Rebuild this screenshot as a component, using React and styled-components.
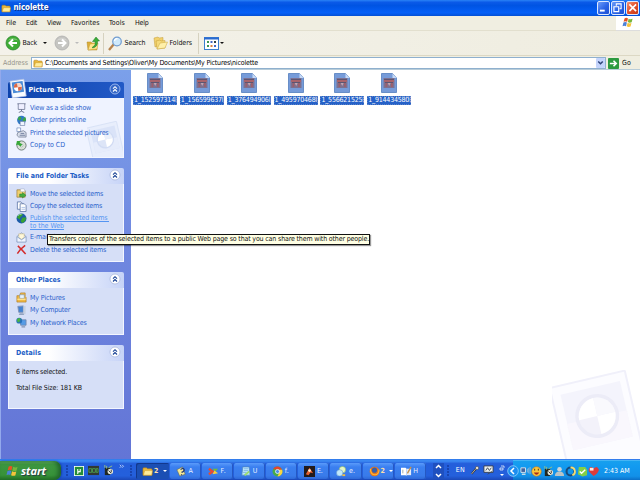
import React, { useLayoutEffect, useRef, useState } from "react";
import styled, { createGlobalStyle, css } from "styled-components";

const Global = createGlobalStyle`
  * { box-sizing: border-box; }
  html, body { margin: 0; padding: 0; overflow: hidden; }
  body { font-family: "DejaVu Sans Condensed", "DejaVu Sans", sans-serif; font-stretch: condensed; font-size: 7px; color: #111; }
`;

/* A single line of text whose tracking is adjusted to fill a given width. */
const Line = styled.span`
  display: block;
  flex: none;
  width: ${(p) => p.$w}px;
  margin-left: ${(p) => p.$ml || 0}px;
  white-space: pre;
  line-height: 1.2;
`;
function Fit({ w, ml, children }) {
  const ref = useRef(null);
  const [track, setTrack] = useState(0);
  useLayoutEffect(() => {
    const width = ref.current.getBoundingClientRect().width;
    setTrack((w - width) / String(children).length);
  }, [w, children]);
  return (
    <Line $w={w} $ml={ml}>
      <span ref={ref} style={{ letterSpacing: track }}>{children}</span>
    </Line>
  );
}

const Screen = styled.div`
  width: 640px; height: 480px; display: flex; flex-direction: column;
  background: #fff; overflow: hidden; position: relative;
`;
const TitleBar = styled.header`
  height: 16px; flex: none; display: flex; align-items: center; padding: 0 1px 0 1px;
  background: linear-gradient(#2a83f6 0, #0b5ae8 14%, #0054e3 35%, #0560f8 80%, #0450d4 100%);
  color: #fff; font-size: 8px; font-weight: bold; text-shadow: 1px 1px #0a2f8a;
`;
const Spacer = styled.div`flex: 1;`;
const Gap = styled.i`width: ${(p) => p.$w || 6}px; flex: none;`;
const Controls = styled.div`display: flex; gap: 1px;`;
const Control = styled.div`
  width: 13.5px; height: 13.5px; border: 1px solid #dce8ff; border-radius: 2px;
  background: ${(p) => (p.$close ? "linear-gradient(135deg,#f39474,#e2502b 50%,#c63a18)" : "linear-gradient(135deg,#6d9cf8,#2a63e6 55%,#1e4fd0)")};
  display: flex;
  svg { width: 100%; height: 100%; }
`;
const MenuBar = styled.nav`
  height: 15px; flex: none; display: flex; align-items: center; background: #f0eee1;
  border-bottom: 1px solid #e2dfce; padding-left: 6px;
`;
const Flag = styled.div`
  width: 24px; height: 15px; background: #fff; display: flex; align-items: center; justify-content: center;
  border-bottom: 1px solid #ddd;
`;
const Toolbar = styled.div`
  height: 25px; flex: none; display: flex; align-items: center; padding-left: 5px;
  background: linear-gradient(90deg, #f4f2ea, #efede0); border-bottom: 1px solid #dcd8c4;
`;
const Rule = styled.i`
  width: 1px; height: 21px; background: #d6d2c0; margin-left: ${(p) => p.$ml}px; flex: none;
`;
const Caret = styled.i`
  flex: none; border: 2px solid transparent; border-top: 2.5px solid ${(p) => p.$c || "#111"}; border-bottom: 0; margin-left: ${(p) => p.$ml}px;
`;
const AddressBar = styled.div`
  height: 14px; flex: none; display: flex; align-items: center; padding: 1px 0 0 3px; background: #f0eee0;
  border-bottom: 1px solid #b9cdd9;
`;
const Caption = styled.div`color: #96948a; width: 28px; flex: none;`;
const Field = styled.div`
  width: 575px; height: 12px; flex: none; display: flex; align-items: center; background: #fff; border: 1px solid #8fb0ce; padding-left: 1px; color: #000;
`;
const DropButton = styled.div`
  width: 9px; height: 10px; border-radius: 1px; background: #c4d4fc; display: flex; flex: none;
`;
const Body = styled.div`flex: 1; min-height: 0; display: flex;`;
const Sidebar = styled.aside`
  width: 131px; flex: none; padding: 12px 7px 0 8px; display: flex; flex-direction: column; gap: 10px;
  background: linear-gradient(#7ba0ea, #7088e0 45%, #6375d6); box-shadow: inset 1px 0 #93a9ec;
`;
const Panel = styled.section`
  height: ${(p) => p.$h}px; flex: none; display: flex; flex-direction: column;
`;
const PanelHead = styled.div`
  height: 16px; flex: none; display: flex; align-items: center; padding: 0 3px 0 8px; border-radius: 2px 2px 0 0;
  font-weight: bold; color: #215dc6;
  background: linear-gradient(90deg, #fff 35%, #c6d3f7);
  > svg { margin-top: -2px; }
  ${(p) => p.$primary && css`
    padding-left: 0; color: #fff; background: linear-gradient(90deg, #0d43ac, #2259c6);
  `}
`;
const PanelBody = styled.div`
  flex: 1; padding: ${(p) => p.$top || 3.6}px 0 0 7px; color: #2b62cc; background: ${(p) => (p.$primary ? "#eff3ff" : "#d6dff7")};
  border: 1px solid #f3f6ff; border-top: 0; position: relative;
`;
const Task = styled.div`
  height: ${(p) => p.$h || 12.5}px; display: flex; align-items: ${(p) => (p.$h ? "flex-start" : "center")}; gap: 3px; position: relative;
  > svg { width: 11px; height: 11px; flex: none; }
`;
const LinkLines = styled.div`
  color: #5595f2; text-decoration: underline; line-height: 8px; padding-top: 1px;
  > span { line-height: 8px; }
`;
const Detail = styled.p`margin: 0; height: 16px; color: #111;`;
const Ghost = styled.svg`position: absolute; right: 0; bottom: 0; width: 36px; height: 36px;`;
const PhotoWrap = styled.div`width: 20.5px; height: 22px; flex: none; margin-bottom: 5px; svg { display: block; }`;
const Main = styled.main`flex: 1; min-width: 0; position: relative; padding: 3px 0 0 2px; overflow: hidden;`;
const Files = styled.div`display: grid; grid-template-columns: repeat(6, 44px); column-gap: 2.85px;`;
const File = styled.figure`
  margin: 0; display: flex; flex-direction: column; align-items: center; gap: 2.5px;
  svg { width: 16px; height: 20px; }
`;
const FileName = styled.figcaption`
  width: 44px; height: 9.5px; background: #2561c8; color: #fff; padding-left: 1px; overflow: hidden;
  outline: 1px dotted #5b83c8; outline-offset: -1px;
  display: flex; align-items: center;
`;
const Watermark = styled.svg`position: absolute; right: -1px; bottom: 0; width: 89px; height: 89px;`;
const Tip = styled.div`
  position: absolute; left: 47px; top: 234px; width: 323px; height: 11px; background: #ffffe4; border: 1px solid #111;
  box-shadow: 1px 1px 1px #0006; color: #111; display: flex; align-items: center; padding-left: 1px;
`;
const Taskbar = styled.footer`
  height: 21px; flex: none; display: flex; align-items: center; color: #fff;
  background: linear-gradient(#2f78ea 0, #3d8cf4 9%, #245edb 22%, #2460dc 80%, #1b48b8 100%);
`;
const Start = styled.div`
  width: 61px; height: 19px; margin-top: 2px; flex: none; display: flex; align-items: center; padding-left: 6px; gap: 2px;
  border-radius: 0 7px 7px 0; background: linear-gradient(#65ad62 0, #3d9640 18%, #379239 75%, #247526);
  box-shadow: inset -3px 0 4px #20652a, 1px 0 2px #173fa5;
  font: italic bold 11px "Open Sans", sans-serif; text-shadow: 1px 1px 1px #234;
`;
const Grip = styled.i`
  width: 3px; height: 12px; margin: 2px 0 0 ${(p) => p.$ml}px; flex: none;
  background: radial-gradient(circle at 1px 1px, #143b9f 0.6px, transparent 1px) 0 0 / 3px 3px;
`;
const Quick = styled.div`
  display: flex; align-items: center; gap: 4px; margin: 2px 0 0 5px; width: 56px; flex: none;
  svg { flex: none; }
  svg:last-child { margin: -7px 0 0 1px; }
`;
const Tasks = styled.div`display: flex; gap: 1px; margin: 3px 0 0 3px; flex: none;`;
const TaskButton = styled.div`
  width: ${(p) => (p.$on ? 33 : 31.1)}px; height: 16px; display: flex; align-items: center; padding-left: 6px;
  border-radius: 2px; color: ${(p) => (p.$warm ? "#ffe0a8" : "#e8f1ff")}; font-weight: ${(p) => (p.$bold ? "bold" : "normal")};
  background: ${(p) => (p.$on ? "#1b4fb4" : "linear-gradient(#5b9bfa, #3a7ff0 25%, #397bea 80%, #2e69d8)")};
  box-shadow: ${(p) => (p.$on ? "inset 1px 1px #12388c" : "inset -1px 0 #2558c2")};
  svg { width: 11px; height: 11px; flex: none; }
`;
const Scroller = styled.div`width: 11px; margin: 2px 0 0 7px; flex: none; svg { display: block; }`;
const Lang = styled.div`
  display: flex; align-items: center; margin: 2px 0 0 6px; width: 57px; flex: none; svg { flex: none; }
`;
const Tray = styled.div`
  flex: 1; height: 20px; display: flex; align-items: center; padding-top: 2px; border-top: 1px solid #45b5f5;
  background: linear-gradient(#17a0ee 0, #129af0 30%, #1290e8 80%, #0b6fc8);
`;
const TrayIcons = styled.div`
  display: flex; flex: none; gap: 0.4px;
  svg { width: 11px; height: 11px; flex: none; }
`;
const Chevron = styled.div`width: 12px; height: 12px; flex: none; margin: 0 1px 0 -6px; svg { display: block; }`;

const Svg = ({ children, v = "0 0 12 12", w = 12, h = 12, ...rest }) => (
  <svg viewBox={v} width={w} height={h} fill="none" {...rest}>{children}</svg>
);
const Folder = ({ w = 11, h = 10 }) => (
  <Svg w={w} h={h} v="0 0 12 10">
    <path d="M1 2q0-1 1-1h3l1 1h4q1 0 1 1v6H1z" fill="#e9b83d" stroke="#a87916" strokeWidth=".6" />
    <path d="M1.500 9 3 4h8.500L10.500 9z" fill="#ffeb99" stroke="#c79528" strokeWidth=".5" />
  </Svg>
);
const RoundArrow = ({ grey }) => (
  <Svg w={16} h={16} v="0 0 16 16">
    <circle cx="8" cy="8" r="7" fill={grey ? "#c5c5c1" : "#3fac35"} stroke={grey ? "#aaa" : "#25822a"} strokeWidth=".7" />
    <path d="M3 5.500a5.500 4 0 0 1 10 0Q8 3.700 3 5.500" fill="#fff" opacity=".35" />
    <path d={grey ? "M4 8h7M8 4.500 11.500 8 8 11.500" : "M12 8H5M8 4.500 4.500 8 8 11.500"} stroke="#fff" strokeWidth="2" />
  </Svg>
);
const UpFolder = () => (
  <Svg w={14} h={15} v="0 0 14 15">
    <path d="M1 6h4l1 1h5v7H2z" fill="#dcae35" stroke="#b08a2a" strokeWidth=".5" />
    <path d="M2 14 4 8l8-1-1 6z" fill="#ffe68e" stroke="#c79c38" strokeWidth=".5" />
    <path d="M6.500 11Q10 9.500 9 5.500H6.500L10 1l3.500 4H11.500q.5 6-5 7z" fill="#3aad38" stroke="#1e7922" strokeWidth=".5" />
  </Svg>
);
const Magnifier = () => (
  <Svg w={15} h={15} v="0 0 15 15">
    <path d="m1 14 5-6" stroke="#b7834d" strokeWidth="2.300" />
    <circle cx="9" cy="5.500" r="4.300" fill="#cfe9fb" stroke="#729dd0" strokeWidth="1.200" />
    <path d="M6.500 5a2.700 2.700 0 0 1 3-2.300" stroke="#fff" strokeWidth="1.200" />
  </Svg>
);
const FolderPair = () => (
  <Svg w={15} h={14} v="0 0 15 14">
    <path d="M1 2 5 1l1 1 4-.5V8L2 11z" fill="#f2d16c" stroke="#c09b37" strokeWidth=".5" />
    <path d="m3 5 4-1 1 1 4-.5V12l-8 1z" fill="#f5d979" stroke="#c09b37" strokeWidth=".5" />
    <path d="m4 13 3-6 7.500-1L12 12z" fill="#fff0a9" stroke="#c9a43f" strokeWidth=".5" />
  </Svg>
);
const Views = () => (
  <Svg w={15} h={13} v="0 0 15 13">
    <rect x=".5" y=".5" width="14" height="12" fill="#fff" stroke="#3a7fd0" />
    <path d="M0 1.500h15" stroke="#2b6bd0" strokeWidth="2" />
    <path d="M3 5h2M3 9h2" stroke="#3e9552" strokeWidth="2" /><path d="M6.500 5h2M10 9h2" stroke="#4269c5" strokeWidth="2" />
    <path d="M10 5h2" stroke="#344" strokeWidth="2" /><path d="M6.500 9h2" stroke="#d88143" strokeWidth="2" />
  </Svg>
);
const WinFlag = ({ w = 12, h = 11 }) => (
  <Svg w={w} h={h}>
    <path d="M2.200 1.500Q4 .3 6 1.500L5 5.300Q3 4.200 1.200 5.300z" fill="#e65324" />
    <path d="M6.700 1.800q2 1.200 4.300.2l-1 3.700q-2.300 1-4.200-.2z" fill="#77b63b" />
    <path d="M1 6.100q2-1.100 3.800-.1l-1 4Q2 9 0 10z" fill="#4c81d7" />
    <path d="M5.600 6.300q2 1.200 4.200.2l-1 3.900q-2.200 1-4.200-.2z" fill="#f6c33b" />
  </Svg>
);
const Collapse = ({ dark }) => (
  <Svg w={12} h={12}>
    <circle cx="6" cy="6" r="5" fill={dark ? "#3567c7" : "#fff"} stroke={dark ? "#b4caf5" : "#aab7dc"} strokeWidth=".8" />
    <path d="m4 5.700 2-2 2 2M4 8.500l2-2 2 2" stroke={dark ? "#fff" : "#153f92"} strokeWidth="1.100" />
  </Svg>
);
const Photo = () => (
  <Svg w={22} h={22} v="0 0 22 22">
    <g transform="rotate(-8 11 11)">
      <rect x="3" y="3" width="14" height="17" fill="#f8fbff" stroke="#b4c3e5" strokeWidth=".7" />
      <rect x="4.500" y="4.500" width="11" height="11" fill="#4b8bd6" />
      <circle cx="10" cy="10" r="4" fill="#fff" />
      <path d="M10 10V6A4 4 0 0 0 6 10zM10 10v4a4 4 0 0 0 4-4z" fill="#dc6744" />
      <path d="M10 10V6a4 4 0 0 1 4 4z" fill="#f3d5c8" />
    </g>
  </Svg>
);
const GhostArt = ({ faint }) => (
  <g transform="rotate(-13 45 45)">
    <rect x="5" y="8" width="77" height="98" rx="1" fill={faint ? "#fcfcff" : "#e8eefc"} stroke={faint ? "#f0f0fa" : "#d6e0f5"} strokeWidth="2" />
    <rect x="14" y="17" width="61" height="57" fill={faint ? "#f4f4fc" : "#dae3f8"} />
    <path d="M14 47h61v27H14z" fill={faint ? "#f9f7fd" : "#e6ecfb"} />
    <circle cx="45" cy="46" r="22" fill={faint ? "#ececf7" : "#d2dcf4"} />
    <circle cx="45" cy="46" r="18.500" fill={faint ? "#f3f2fa" : "#dde5f7"} />
    <path d="M45 46H26.500a18.500 18.500 0 0 1 18.500-18.500zM45 46h18.500a18.500 18.500 0 0 1-18.500 18.500z" fill="#fff" />
    <path d="M45 46V27.500a18.500 18.500 0 0 1 18.500 18.500z" fill={faint ? "#f9f9fd" : "#ebf0fb"} />
  </g>
);

const glyphs = {
  slide: <><path d="M1.500 2h9M2.500 2v6h7V2M6 8v2l-3 1.500M6 10l3 1.500" stroke="#6a7390" /><path d="M3 2.500h6v5H3z" fill="#eef" /></>,
  globePrint: <><circle cx="6" cy="5.500" r="4.800" fill="#2f79c6" /><path d="M3 1.500q3 0 3 2.500L4 6 2 5zM7 5l3-3q1 2 1 4L8 8z" fill="#3da545" /><path d="M4.500 7h5v4.500h-5z" fill="#eef4ff" stroke="#586b97" strokeWidth=".6" /></>,
  printer: <><path d="M1 1h4v4H1z" fill="#fff" stroke="#6380b5" strokeWidth=".7" /><path d="m2 6 6-2 3 2v5H3L1 9z" fill="#d8deea" stroke="#606a82" strokeWidth=".7" /><path d="M5 7h4M4 9h6" stroke="#56658a" strokeWidth=".8" /></>,
  cd: <><circle cx="6" cy="6" r="5" fill="#d9e0d8" stroke="#5d6c68" strokeWidth=".9" /><circle cx="6" cy="6" r="1.500" fill="#fff" stroke="#788" strokeWidth=".5" /><path d="M1 1h4l-1 2 3 2-2 2-3-2-2 1z" fill="#38a83a" /></>,
  move: <><path d="M1 2h4l1 1h4v7H1z" fill="#f0cf6f" stroke="#927333" strokeWidth=".7" /><path d="M5 1h4l1 3H5z" fill="#fff" stroke="#8793a8" strokeWidth=".4" /><path d="M4 6.500h3V5l4 3-4 3V9.500H4z" fill="#45ac40" stroke="#26752b" strokeWidth=".5" /></>,
  copy: <><path d="M1.500 1h4l2 2v6h-6z" fill="#fff" stroke="#50699d" strokeWidth=".8" /><path d="M4.500 3H9l2 2v6.500H4.500z" fill="#fff" stroke="#50699d" strokeWidth=".8" /><path d="M6 7h4M6 9h4" stroke="#acc1e7" /></>,
  globe: <><circle cx="6" cy="6" r="5.400" fill="#1d5ca8" /><path d="M1 5q2-4 6-4 1 2-2 3L4 7zM7 5h4q0 4-4 6L5 9z" fill="#37a233" /><path d="M2 3q2-2 4-1.500" stroke="#a6e090" /></>,
  mail: <><path d="M1 5 6 1l5 4v6H1z" fill="#eff4ff" stroke="#6982ad" strokeWidth=".7" /><path d="M3 2h6v4L6 8 3 6z" fill="#fff8d9" stroke="#b2a171" strokeWidth=".5" /><path d="m1 5 5 3.500L11 5" stroke="#6f90c3" strokeWidth=".7" /></>,
  cross: <path d="M2 2q4 3.500 8.500 9M10 1.500Q5 5 1.500 10.500" stroke="#d32b2b" strokeWidth="1.600" />,
  pictures: <><path d="M1 4h3l1-3h5v4l1 1v5H1z" fill="#f0b945" stroke="#ae7c23" strokeWidth=".7" /><path d="M4 3h5v4H4z" fill="#e6f4ff" stroke="#7190b0" strokeWidth=".6" /><path d="M1.500 8h9" stroke="#ffe18a" strokeWidth="1.500" /></>,
  computer: <><path d="M2 1.500 8 1v7H3z" fill="#4383d4" stroke="#8193b6" /><path d="M8 1h2.500v9H8z" fill="#c6d0e0" /><path d="M4 9h4l1 2H3z" fill="#93a3c0" /></>,
  network: <><path d="M5 3h6v6H5z" fill="#559be6" stroke="#7184a8" strokeWidth=".8" /><path d="M6 10h4v1.500H6z" fill="#8898b8" /><circle cx="3.500" cy="4" r="3.200" fill="#2872bb" /><path d="M1 3q2-3 4-1L4 5 2 6z" fill="#4ab544" /></>,
  mu: <><rect width="12" height="12" fill="#f5fff3" /><path d="M1 1h10v10H1z" fill="#258d37" /><path d="M4.500 9.500V3.500v2q0 1.500 1.500 1.500t1.500-1.500v-2V7.500" stroke="#fff" strokeWidth="1.300" /></>,
  dark: <><path d="M0 1h12v10H0z" fill="#313934" /><path d="M1 4h3v4H1zM5 4h3v4H5zM9 4h2v4H9z" stroke="#53b357" strokeWidth=".8" /></>,
  winamp: <><path d="M2 3h6v8H2z" fill="#202721" /><path d="M2 0v3M4 1v3M6 3l4-2" stroke="#98c27d" /><circle cx="8" cy="7" r="3" fill="#e0e6dc" /><path d="m6 6 3 3M9 5v3" stroke="#333" /></>,
  help: <><path d="m1 4 6-3 3 8-6 2z" fill="#f5e894" stroke="#606455" strokeWidth=".6" /><path d="M5 4q3-3 4 0 0 2-3 3M6 9v1" stroke="#263b75" strokeWidth="1.300" /></>,
  knot: <><path d="m1 3 4 3-4 3" stroke="#e74b32" strokeWidth="2.500" /><path d="M5 3h6L8 6z" fill="#76bd32" /><path d="m5 9 6-1-4-3z" fill="#ffcf35" /></>,
  note: <><path d="M3 1h7l1 9H2z" fill="#bfe6ff" stroke="#4e88bd" strokeWidth=".8" /><path d="M4 3h5M4 5h5M3 7h4" stroke="#5fa5d8" strokeWidth=".7" /><path d="m5 10 5-4" stroke="#9cdc70" strokeWidth="2" /></>,
  chrome: <><circle cx="6" cy="6" r="5.400" fill="#47aa4b" /><path d="M1.300 3.300A5.400 5.400 0 0 1 11 4H6z" fill="#e7432e" /><path d="M11 4a5.400 5.400 0 0 1-5 7.400L8 7 7 4z" fill="#fbd43f" /><circle cx="6" cy="6" r="2.200" fill="#4d8deb" stroke="#fff" strokeWidth=".8" /></>,
  art: <><path d="M0 0h12v12H0z" fill="#221b1b" /><path d="M2 9 6 2l4 6-3-1-2 3z" fill="#e86130" /><circle cx="6" cy="5" r="1.500" fill="#fff1d5" /></>,
  bubbles: <><circle cx="7" cy="4" r="3.500" fill="#e5f6c7" stroke="#87b55a" strokeWidth=".6" /><circle cx="4" cy="7.500" r="3.500" fill="#c1e8fa" stroke="#5c93ce" strokeWidth=".6" /><path d="M7 10h3" stroke="#f4bd3c" strokeWidth="2" /></>,
  fox: <><circle cx="6" cy="6" r="5.300" fill="#e8761d" /><circle cx="6" cy="4.500" r="2.800" fill="#345fa9" /><path d="M1.500 3q0 6 4.500 6.500T11 4" stroke="#ffb733" strokeWidth="1.200" /></>,
  book: <><path d="M0 2h5l1 1v8L5 10H0z" fill="#fff" /><path d="M6 3h5v7H6z" fill="#e7edf6" /><path d="m7 8 4-7" stroke="#c4924e" strokeWidth="1.500" /><path d="M2 4v4" stroke="#9aa" /></>,
  mic: <><path d="m2 10 5-6" stroke="#2b2f3a" strokeWidth="2.200" /><path d="m2 10 5-6" stroke="#d9c9a8" strokeWidth="1" /><circle cx="8.500" cy="3" r="2" fill="#e9e0cc" stroke="#2b2f3a" strokeWidth=".6" /></>,
  screen: <><path d="M1 1h10v7H1z" fill="#eef1ef" stroke="#303a4e" /><path d="m3 6 2-3 2 3 2-3M5 10l5-3" stroke="#444b54" /></>,
  wave: <><path d="M1 2h5v5H1z" fill="#4164a0" stroke="#dce6ee" /><path d="M2 9h4" stroke="#cfe0e8" strokeWidth="1.500" /><path d="M8 3v4M9.500 2v6M11 1v8" stroke="#a9bed4" strokeWidth=".8" /></>,
  smile: <><circle cx="6" cy="6" r="5.200" fill="#fac83a" stroke="#ca7020" strokeWidth=".6" /><path d="M3 7q3 5 6 0z" fill="#a62b1a" /><path d="M4 3v2M8 3v2" stroke="#482a18" /></>,
  person: <><circle cx="6" cy="3.500" r="2.500" fill="#cdd5d8" /><path d="M1 11q0-5 5-5t5 5z" fill="#b8c3c6" /></>,
  ring: <><circle cx="6" cy="6" r="4.300" stroke="#194a7b" strokeWidth="2.300" /><path d="M6 1.700A4.300 4.300 0 0 1 8 10" stroke="#f4db71" strokeWidth="2" /></>,
  skype: <><path d="M2 1h7l2 3v6l-5 1.500L1 9z" fill="#83cf45" /><path d="m3 6 2 2 4-4" stroke="#fff" strokeWidth="1.500" /></>,
  heart: <><path d="M6 11 1 6Q0 1 4 1l2 2q4-4 6 1-1 4-6 7" fill="#dd3b3b" /><path d="M2 2h4v3H2z" fill="#ffe8e0" /></>,
};
const Glyph = ({ n, w, h }) => <Svg w={w} h={h}>{glyphs[n]}</Svg>;

const FileIcon = () => (
  <Svg v="0 0 16 20">
    <path d="M.5.500h11L15.500 5v14.500H.5z" fill="#769bd9" stroke="#537dbe" strokeWidth=".8" />
    <path d="M11.500.500V5h4z" fill="#c5d9f7" />
    <path d="M2.500 5h11v10h-11z" fill="#7d7190" />
    <path d="M3 6.500h10V9H3z" fill="#a8636b" />
    <path d="M4.500 9h1.800v5H4.500zM10 9h1.800v5H10z" fill="#9b5f6c" />
    <path d="M3 6.500h10M4 9.500h8" stroke="#50506f" strokeWidth=".8" />
    <path d="M6.800 10h2.800l-1.400 3z" fill="#c4a5b0" />
  </Svg>
);

const names = ["1_152597314l", "1_156599637l", "1_376494906l", "1_495970468l", "1_556621525l", "1_914434580l"];
const menu = [["File", 10, 0], ["Edit", 11, 10], ["View", 14, 10], ["Favorites", 28.5, 10], ["Tools", 16, 9.500], ["Help", 13.5, 10]];
const running = [["help", "A", 5], ["knot", "F.", 6], ["note", "U", 5], ["chrome", "f.", 4], ["art", "E.", 6], ["bubbles", "e.", 6]];

const Row = ({ icon, w, children }) => (
  <Task><Glyph n={icon} /><Fit w={w}>{children}</Fit></Task>
);

export default function App() {
  return (
    <Screen>
      <Global />
      <TitleBar>
        <Folder w={10} h={9} /><Fit w={35} ml={2.5}>nicolette</Fit><Spacer />
        <Controls>
          <Control><Svg><path d="M2 9h5" stroke="#fff" strokeWidth="2" /></Svg></Control>
          <Control><Svg><path d="M4.500 4V2h5v5H8M2 5h5v5H2z" stroke="#fff" strokeWidth="1.200" /></Svg></Control>
          <Control $close><Svg><path d="m2.500 2.500 7 7m0-7-7 7" stroke="#fff" strokeWidth="1.700" /></Svg></Control>
        </Controls>
      </TitleBar>
      <MenuBar>
        {menu.map(([t, w, ml]) => <Fit key={t} w={w} ml={ml}>{t}</Fit>)}
        <Spacer /><Flag><WinFlag /></Flag>
      </MenuBar>
      <Toolbar>
        <RoundArrow /><Fit w={14.5} ml={1.5}>Back</Fit><Caret $ml={5.5} />
        <Gap $w={7} /><RoundArrow grey /><Caret $ml={5} $c="#bbb" /><Gap $w={7} /><UpFolder />
        <Rule $ml={3} /><Gap $w={4} /><Magnifier /><Fit w={21} ml={2}>Search</Fit>
        <Gap $w={7} /><FolderPair /><Fit w={22.5} ml={2}>Folders</Fit>
        <Rule $ml={6} /><Gap $w={5} /><Views /><Caret $ml={1} />
      </Toolbar>
      <AddressBar>
        <Caption><Fit w={25}>Address</Fit></Caption>
        <Field>
          <Folder w={10} h={9} />
          <Fit w={213} ml={2}>{"C:\\Documents and Settings\\Oliver\\My Documents\\My Pictures\\nicolette"}</Fit>
          <Spacer />
          <DropButton><Svg w={9} h={10}><path d="m3 4 3 3 3-3" stroke="#2d4379" strokeWidth="2" /></Svg></DropButton>
        </Field>
        <Gap $w={2} />
        <Svg w={11} h={11}><rect width="12" height="12" rx="1" fill="#2c9a40" /><path d="M2 6h7M6 3l3 3-3 3" stroke="#fff" strokeWidth="1.700" /></Svg>
        <Fit w={9} ml={3}>Go</Fit>
      </AddressBar>
      <Body>
        <Sidebar>
          <Panel $h={76}>
            <PanelHead $primary>
              <PhotoWrap><Photo /></PhotoWrap><Fit w={48}>Picture Tasks</Fit><Spacer /><Collapse dark />
            </PanelHead>
            <PanelBody $primary>
              <Ghost viewBox="0 0 89 89"><GhostArt /></Ghost>
              <Row icon="slide" w={61}>View as a slide show</Row>
              <Row icon="globePrint" w={56}>Order prints online</Row>
              <Row icon="printer" w={78.5}>Print the selected pictures</Row>
              <Row icon="cd" w={35}>Copy to CD</Row>
            </PanelBody>
          </Panel>
          <Panel $h={94}>
            <PanelHead><Fit w={73}>File and Folder Tasks</Fit><Spacer /><Collapse /></PanelHead>
            <PanelBody>
              <Row icon="move" w={73}>Move the selected items</Row>
              <Row icon="copy" w={72}>Copy the selected items</Row>
              <Task $h={18.5}>
                <Glyph n="globe" />
                <LinkLines><Fit w={79}>Publish the selected items </Fit><Fit w={34}>to the Web</Fit></LinkLines>
              </Task>
              <Row icon="mail" w={78}>E-mail the selected items</Row>
              <Row icon="cross" w={76}>Delete the selected items</Row>
            </PanelBody>
          </Panel>
          <Panel $h={63}>
            <PanelHead><Fit w={44.5}>Other Places</Fit><Spacer /><Collapse /></PanelHead>
            <PanelBody>
              <Row icon="pictures" w={35}>My Pictures</Row>
              <Row icon="computer" w={40}>My Computer</Row>
              <Row icon="network" w={56.5}>My Network Places</Row>
            </PanelBody>
          </Panel>
          <Panel $h={64}>
            <PanelHead><Fit w={25}>Details</Fit><Spacer /><Collapse /></PanelHead>
            <PanelBody $top={6.5}>
              <Detail><Fit w={51}>6 items selected.</Fit></Detail>
              <Detail><Fit w={66}>Total File Size: 181 KB</Fit></Detail>
            </PanelBody>
          </Panel>
        </Sidebar>
        <Main>
          <Files>
            {names.map((n) => (
              <File key={n}><FileIcon /><FileName><Fit w={42.5}>{n}</Fit></FileName></File>
            ))}
          </Files>
          <Watermark viewBox="0 0 89 89"><GhostArt faint /></Watermark>
        </Main>
      </Body>
      <Taskbar>
        <Start><WinFlag w={13} h={12} /><Fit w={25}>start</Fit></Start>
        <Grip $ml={5} />
        <Quick>
          <Glyph n="mu" w={10} h={10} /><Glyph n="dark" w={11} h={11} /><Glyph n="winamp" w={11} h={11} />
          <Svg w={6} h={6} v="0 0 8 8"><path d="m1 1 2 2-2 2m3-4 2 2-2 2" stroke="#dce9ff" /></Svg>
        </Quick>
        <Grip $ml={0} />
        <Tasks>
          <TaskButton $on $warm $bold><Folder /><Fit w={5} ml={1}>2</Fit><Caret $ml={4} $c="#fff" /></TaskButton>
          {running.map(([g, t, w]) => <TaskButton key={g}><Glyph n={g} /><Fit w={w} ml={1.5}>{t}</Fit></TaskButton>)}
          <TaskButton $warm $bold><Glyph n="fox" /><Fit w={5} ml={1}>2</Fit><Caret $ml={3} $c="#fff" /></TaskButton>
          <TaskButton><Glyph n="book" /><Fit w={5} ml={1.5}>H</Fit></TaskButton>
        </Tasks>
        <Scroller><Svg w={11} h={16} v="0 0 11 16"><path d="M0 0h11v16H0z" fill="#1f50bf" /><path d="m3 5 2.500-2.500L8 5M3 11l2.500 2.500L8 11" stroke="#fff" strokeWidth="1.500" /></Svg></Scroller>
        <Grip $ml={3} />
        <Lang>
          <Fit w={9}>EN</Fit><Gap $w={5} /><Glyph n="mic" w={10} h={11} /><Gap $w={3} /><Glyph n="screen" w={11} h={11} /><Gap $w={5} />
          <Svg w={6} h={12} v="0 0 6 12"><path d="M1 3h3v2H1zM2 1h3v2" stroke="#fff" strokeWidth=".7" /><path d="M1 9h4l-2 2z" fill="#fff" /></Svg>
        </Lang>
        <Tray>
          <Chevron><Svg><circle cx="6" cy="6" r="5.300" fill="#1c8df0" stroke="#9cdcff" strokeWidth=".7" /><path d="M7 3 4 6l3 3" stroke="#fff" strokeWidth="1.500" /></Svg></Chevron>
          <TrayIcons>
            {["wave", "smile", "winamp", "person", "ring", "skype", "heart"].map((n) => <Glyph key={n} n={n} />)}
          </TrayIcons>
          <Fit w={25.5} ml={5}>2:43 AM</Fit>
        </Tray>
      </Taskbar>
      <Tip><Fit w={320}>Transfers copies of the selected items to a public Web page so that you can share them with other people.</Fit></Tip>
    </Screen>
  );
}
